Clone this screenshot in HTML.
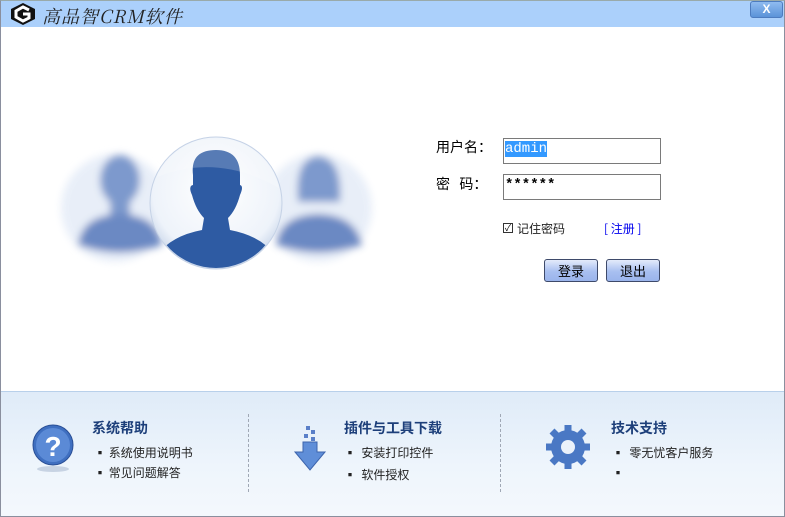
<!DOCTYPE html>
<html><head><meta charset="utf-8"><style>
*{margin:0;padding:0;box-sizing:border-box}
body{width:785px;height:517px;overflow:hidden;background:#fff;font-family:"Liberation Sans","Noto Sans CJK SC",sans-serif;position:relative;font-size:12px}
.win{position:absolute;left:0;top:0;width:785px;height:517px;border:1px solid #8a8f9e;border-top:1px solid #9aa}
.title{position:absolute;left:0;top:0;width:785px;height:27px;background:#abd0fb}
.title .t{position:absolute;left:42px;top:3px;font-family:"Noto Serif CJK SC",serif;font-size:18px;color:#222;font-style:italic;letter-spacing:1px}
.x{position:absolute;left:750px;top:1px;width:33px;height:17px;background:linear-gradient(#8fbbf0,#5b93d8);border:1px solid #4d7cbf;border-radius:3px;color:#fff;font-weight:bold;font-size:12px;text-align:center;line-height:15px}
.lbl{position:absolute;font-size:14px;color:#000;font-family:"Noto Sans CJK SC",sans-serif}
.inp{position:absolute;width:158px;height:26px;border:1px solid #7a7a7a;background:#fff;font-family:"Liberation Mono",monospace;font-size:14px;padding:2px 1px}
.sel{background:#3399ff;color:#fff}
.btn{position:absolute;width:54px;height:23px;border:1px solid #3e4a6a;border-radius:3px;background:linear-gradient(#e4ebfb,#a8bff0 55%,#9ab4ec);font-size:13px;text-align:center;line-height:21px;color:#000;font-family:"Noto Sans CJK SC",sans-serif}
.foot{position:absolute;left:1px;top:391px;width:783px;height:125px;background:linear-gradient(#dfebf8,#eef5fc 60%,#f4f8fd);border-top:1px solid #b8d0ea}
.sep{position:absolute;top:22px;height:78px;border-left:1px dashed #a0a8b5}
.h{position:absolute;font-size:14px;font-weight:bold;color:#1d3f7a;font-family:"Noto Sans CJK SC",sans-serif}
.li{position:absolute;font-size:12px;color:#222;font-family:"Noto Sans CJK SC",sans-serif}
</style></head><body>
<div class="title">
<svg style="position:absolute;left:8px;top:2px" width="30" height="24" viewBox="0 0 30 24"><polygon points="15,1 27,7 27,17 15,23 3,17 3,7" fill="#111"/><path d="M21 8 L15 5 L8 9 L8 15 L15 19 L21 16 L21 12 L15 12" fill="none" stroke="#fff" stroke-width="3"/></svg>
<span class="t">高品智CRM软件</span>
<div class="x">X</div>
</div>
<svg style="position:absolute;left:50px;top:120px" width="330" height="160" viewBox="0 0 330 160">
<defs><filter id="b"><feGaussianBlur stdDeviation="4"/></filter>
<radialGradient id="g" cx="50%" cy="40%" r="60%"><stop offset="0" stop-color="#fff"/><stop offset="0.8" stop-color="#eef3fa"/><stop offset="1" stop-color="#c9d6ea"/></radialGradient>
<clipPath id="c"><circle cx="166" cy="83" r="65"/></clipPath></defs>
<g filter="url(#b)" opacity="0.9">
<circle cx="65" cy="88" r="54" fill="#e6edf8"/>
<ellipse cx="70" cy="60" rx="20" ry="25" fill="#6f8fc8"/><rect x="60" y="78" width="20" height="20" fill="#6f8fc8"/><path d="M28 125 Q32 95 70 94 Q108 95 112 125 Q70 140 28 125Z" fill="#5b7dbd"/>
<circle cx="268" cy="88" r="54" fill="#e6edf8"/>
<path d="M248 82 Q244 38 268 36 Q293 38 290 82 Z" fill="#6f8fc8"/><path d="M226 125 Q230 95 268 94 Q306 95 312 125 Q268 140 226 125Z" fill="#5b7dbd"/>
</g>
<circle cx="166" cy="83" r="66" fill="url(#g)" stroke="#c5d2e6"/>
<g clip-path="url(#c)">
<path d="M143 55 Q140 30 166 30 Q190 30 190 55 L190 65 Q194 66 190 75 Q186 90 178 98 L180 110 Q222 118 232 150 L100 150 Q110 118 152 110 L154 98 Q146 90 142 75 Q138 66 143 65 Z" fill="#2e5ba3"/>
<path d="M100 60 Q166 30 232 70 L232 20 L100 20Z" fill="#fff" opacity="0.2"/>
</g>
</svg>
<div class="lbl" style="left:436px;top:137px">用户名：</div>
<div class="inp" style="left:503px;top:138px"><span class="sel">admin</span></div>
<div class="lbl" style="left:436px;top:174px">密&nbsp;&nbsp;&nbsp;码：</div>
<div class="inp" style="left:503px;top:174px;font-weight:bold">******</div>
<div style="position:absolute;left:503px;top:223px;width:10px;height:10px;border:1px solid #333;font-size:9px;line-height:8px;text-align:center">✓</div>
<div class="li" style="left:517px;top:220px;font-size:12px">记住密码</div>
<div class="li" style="left:604px;top:220px;color:#0000ee">[ 注册 ]</div>
<div class="btn" style="left:544px;top:259px">登录</div>
<div class="btn" style="left:606px;top:259px">退出</div>
<div class="foot">
<div class="sep" style="left:247px"></div><div class="sep" style="left:499px"></div>
<svg style="position:absolute;left:29px;top:31px" width="46" height="50" viewBox="0 0 46 50"><ellipse cx="23" cy="46" rx="16" ry="3" fill="#c7d3e3"/><circle cx="23" cy="22" r="20" fill="#3f6fc0" stroke="#2a4f96"/><circle cx="23" cy="22" r="17" fill="#5b8ad6"/><text x="23" y="33" font-size="28" font-weight="bold" fill="#fff" text-anchor="middle" font-family="Liberation Sans">?</text></svg>
<div class="h" style="left:91px;top:26px">系统帮助</div>
<div class="li" style="left:93px;top:52px">▪ 系统使用说明书</div>
<div class="li" style="left:93px;top:72px">▪ 常见问题解答</div>
<svg style="position:absolute;left:292px;top:34px" width="36" height="50" viewBox="0 0 36 50"><rect x="13" y="0" width="4" height="4" fill="#5a7fc8"/><rect x="18" y="4" width="4" height="4" fill="#5a7fc8"/><rect x="11" y="8" width="4" height="4" fill="#5a7fc8"/><rect x="18" y="11" width="4" height="4" fill="#5a7fc8"/><path d="M10 16 H24 V26 H32 L17 44 L2 26 H10Z" fill="#5f8ed8" stroke="#3c64ad"/></svg>
<div class="h" style="left:343px;top:26px">插件与工具下载</div>
<div class="li" style="left:343px;top:52px">▪&nbsp; 安装打印控件</div>
<div class="li" style="left:343px;top:74px">▪&nbsp; 软件授权</div>
<svg style="position:absolute;left:544px;top:32px" width="46" height="46" viewBox="0 0 46 46"><g fill="#4a78c4"><circle cx="23" cy="23" r="17"/><g stroke="#4a78c4" stroke-width="7"><line x1="23" y1="1" x2="23" y2="45"/><line x1="1" y1="23" x2="45" y2="23"/><line x1="7" y1="7" x2="39" y2="39"/><line x1="39" y1="7" x2="7" y2="39"/></g></g><circle cx="23" cy="23" r="7" fill="#eaf1fa"/></svg>
<div class="h" style="left:610px;top:26px">技术支持</div>
<div class="li" style="left:611px;top:52px">▪&nbsp; 零无忧客户服务</div>
<div class="li" style="left:611px;top:72px">▪</div>
</div>
<div class="win"></div>
</body></html>
